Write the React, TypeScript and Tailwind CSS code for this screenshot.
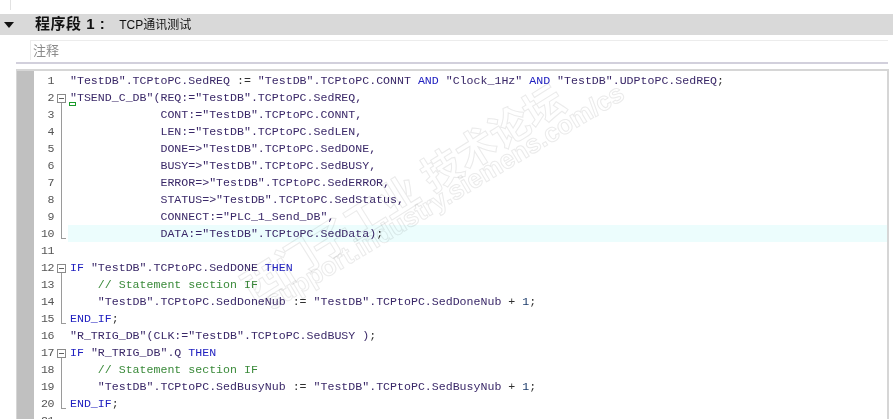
import React from 'react';

type Seg = [string, string];

const ID = 'text-[#3a2868]';
const KW = 'text-[#2020c0]';
const CM = 'text-[#3a8a3a]';
const OP = 'text-[#303030]';

const CODE: Seg[][] = [
  [['"TestDB".TCPtoPC.SedREQ ', ID], [':=', OP], [' "TestDB".TCPtoPC.CONNT ', ID], ['AND', KW], [' "Clock_1Hz" ', ID], ['AND', KW], [' "TestDB".UDPtoPC.SedREQ', ID], [';', OP]],
  [['"TSEND_C_DB"(REQ:="TestDB".TCPtoPC.SedREQ,', ID]],
  [['             CONT:="TestDB".TCPtoPC.CONNT,', ID]],
  [['             LEN:="TestDB".TCPtoPC.SedLEN,', ID]],
  [['             DONE=>"TestDB".TCPtoPC.SedDONE,', ID]],
  [['             BUSY=>"TestDB".TCPtoPC.SedBUSY,', ID]],
  [['             ERROR=>"TestDB".TCPtoPC.SedERROR,', ID]],
  [['             STATUS=>"TestDB".TCPtoPC.SedStatus,', ID]],
  [['             CONNECT:="PLC_1_Send_DB",', ID]],
  [['             DATA:="TestDB".TCPtoPC.SedData)', ID], [';', OP]],
  [],
  [['IF', KW], [' "TestDB".TCPtoPC.SedDONE ', ID], ['THEN', KW]],
  [['    // Statement section IF', CM]],
  [['    "TestDB".TCPtoPC.SedDoneNub ', ID], [':=', OP], [' "TestDB".TCPtoPC.SedDoneNub ', ID], ['+ ', OP], ['1', 'text-[#1a3a6a]'], [';', OP]],
  [['END_IF', KW], [';', OP]],
  [['"R_TRIG_DB"(CLK:="TestDB".TCPtoPC.SedBUSY )', ID], [';', OP]],
  [['IF', KW], [' "R_TRIG_DB".Q ', ID], ['THEN', KW]],
  [['    // Statement section IF', CM]],
  [['    "TestDB".TCPtoPC.SedBusyNub ', ID], [':=', OP], [' "TestDB".TCPtoPC.SedBusyNub ', ID], ['+ ', OP], ['1', 'text-[#1a3a6a]'], [';', OP]],
  [['END_IF', KW], [';', OP]],
  [],
];

// fold marker per line (1-based): start / mid / end
const foldKind = (n: number): 'start' | 'mid' | 'end' | null => {
  if (n === 2 || n === 12 || n === 17) return 'start';
  if (n === 10 || n === 15 || n === 20) return 'end';
  if ((n > 2 && n < 10) || (n > 12 && n < 15) || (n > 17 && n < 20)) return 'mid';
  return null;
};

const Fold: React.FC<{ kind: ReturnType<typeof foldKind> }> = ({ kind }) => {
  if (!kind) return null;
  if (kind === 'start')
    return (
      <>
        <div className="absolute left-[3px] top-[5px] w-[9px] h-[9px] border border-[#8a8a8a] bg-white flex items-center justify-center">
          <div className="w-[5px] h-px bg-[#606060]" />
        </div>
        <div className="absolute left-[7px] top-[14px] bottom-0 w-px bg-[#9a9a9a]" />
      </>
    );
  if (kind === 'mid') return <div className="absolute left-[7px] top-0 bottom-0 w-px bg-[#9a9a9a]" />;
  return (
    <>
      <div className="absolute left-[7px] top-0 h-[14px] w-px bg-[#9a9a9a]" />
      <div className="absolute left-[7px] top-[13px] w-[5px] h-px bg-[#9a9a9a]" />
    </>
  );
};

export default function App() {
  return (
    <div className="relative w-[893px] h-[419px] overflow-hidden bg-white font-['Liberation_Sans','Noto_Sans_CJK_SC',sans-serif]">
      <div className="absolute left-[10px] top-0 h-[10px] w-px bg-[#e2e2e2]" />
      <div className="h-[14px]" />

      {/* network header */}
      <div className="h-[21px] bg-[#d9d9d9] flex items-center">
        <svg width="10" height="6" viewBox="0 0 10 6" className="ml-[4px]">
          <path d="M0 0 L10 0 L5 6 Z" fill="#111" />
        </svg>
        <span className="ml-[21px] text-[15px] font-bold text-[#111] tracking-[0.5px]">程序段 1 :</span>
        <span className="ml-[14px] text-[12px] text-[#111]">TCP通讯测试</span>
      </div>

      {/* comment */}
      <div className="ml-[30px] mr-[5px] mt-[5px] h-[20px] border-t border-l border-[#ececec] flex items-center">
        <span className="ml-[2px] text-[13px] text-[#8a8a8a]">注释</span>
      </div>
      <div className="ml-[16px] mr-[5px] mt-[2px] h-[2px] bg-[#d2d0dc]" />

      {/* code editor */}
      <div className="ml-[16px] mr-[4px] mt-[5px] border-t-2 border-l border-r-2 border-[#d6d6d6] flex h-[400px]">
        <div className="w-[17px] bg-[#c0c0c0] shrink-0" />
        <div className="flex-1 pt-px font-['Liberation_Mono',monospace] text-[11.6px] leading-[17px]">
          {CODE.map((segs, i) => {
            const n = i + 1;
            return (
              <div key={n} className="flex h-[17px]">
                <div className="w-[20px] text-right text-[#555] shrink-0 tracking-[-0.5px]">{n}</div>
                <div className="relative w-[14px] shrink-0">
                  <Fold kind={foldKind(n)} />
                </div>
                <div className={`relative flex-1 whitespace-pre pl-[2px] ${n === 10 ? 'bg-[#ecfdfd]' : ''}`}>
                  {segs.map(([t, c], k) => (
                    <span key={k} className={c}>{t}</span>
                  ))}
                  {n === 2 && (
                    <div className="absolute left-[1px] bottom-0 w-[7px] h-[4px] border border-[#1a9a2a]" />
                  )}
                </div>
              </div>
            );
          })}
        </div>
      </div>

      {/* watermark */}
      <div className="absolute left-[262px] top-[258px] origin-bottom-left -rotate-[32deg] whitespace-nowrap text-[40px] font-bold text-transparent [-webkit-text-stroke:1px_#ebebeb] mix-blend-multiply pointer-events-none">
        西门子工业 技术论坛
      </div>
      <div className="absolute left-[278px] top-[281px] origin-bottom-left -rotate-[31deg] whitespace-nowrap text-[26px] font-bold text-transparent [-webkit-text-stroke:1px_#ebebeb] mix-blend-multiply pointer-events-none">
        support.industry.siemens.com/cs
      </div>
    </div>
  );
}
